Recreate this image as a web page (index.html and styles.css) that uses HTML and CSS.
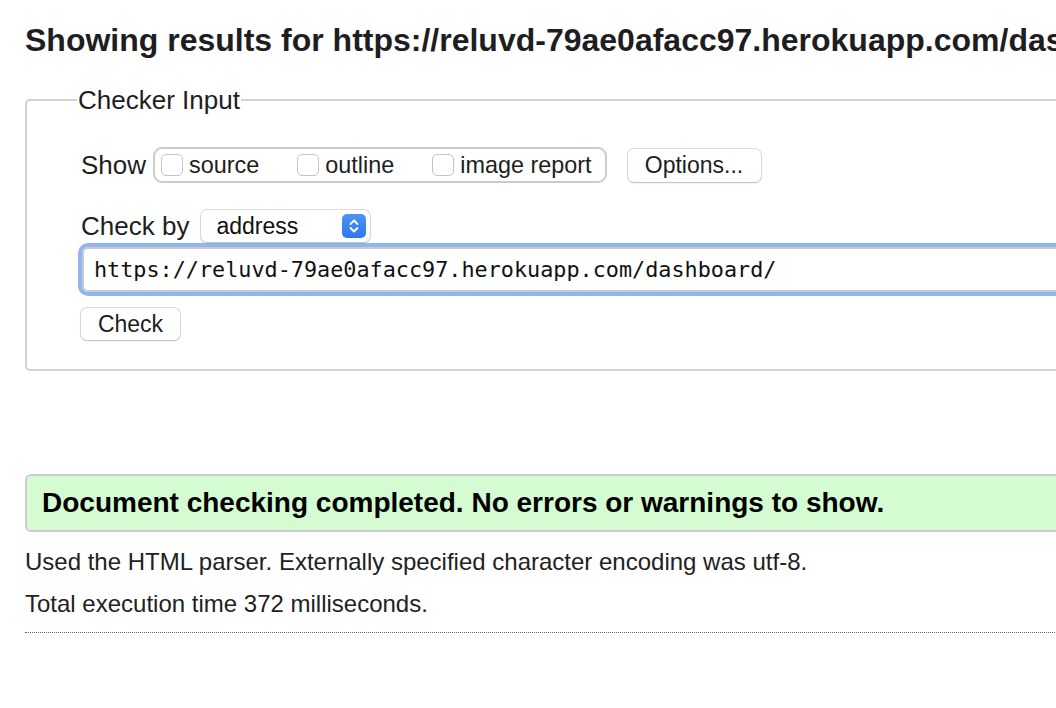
FILE: index.html
```html
<!DOCTYPE html>
<html lang="en">
<head>
<meta charset="utf-8">
<title>Nu Html Checker</title>
<link rel="stylesheet" href="styles.css">
</head>
<body>
<div class="page">
  <h2 class="title">Showing results for https://reluvd-79ae0afacc97.herokuapp.com/dashboard/</h2>
  <fieldset class="checker">
    <legend class="legend">Checker Input</legend>
    <div class="row row-show">
      <span class="label">Show</span>
      <div class="group">
        <span class="opt"><span class="box"></span><span class="opt-text">source</span></span>
        <span class="opt"><span class="box"></span><span class="opt-text">outline</span></span>
        <span class="opt"><span class="box"></span><span class="opt-text">image report</span></span>
      </div>
      <span class="btn btn-options">Options...</span>
    </div>
    <div class="row row-by">
      <span class="label">Check by</span>
      <span class="select">
        <span class="select-text">address</span>
        <span class="stepper">
          <svg width="12" height="16" viewBox="0 0 12 16"><path d="M2.5 6 L6 2.5 L9.5 6" fill="none" stroke="#fff" stroke-width="1.8" stroke-linecap="round" stroke-linejoin="round"/><path d="M2.5 10 L6 13.5 L9.5 10" fill="none" stroke="#fff" stroke-width="1.8" stroke-linecap="round" stroke-linejoin="round"/></svg>
        </span>
      </span>
    </div>
    <div class="url">https://reluvd-79ae0afacc97.herokuapp.com/dashboard/</div>
    <div class="row"><span class="btn btn-check">Check</span></div>
  </fieldset>
  <div class="success">Document checking completed. No errors or warnings to show.</div>
  <p class="info">Used the HTML parser. Externally specified character encoding was utf-8.</p>
  <p class="info info-time">Total execution time 372 milliseconds.</p>
  <div class="rule"></div>
</div>
</body>
</html>
```

FILE: styles.css
```css
html, body {
  margin: 0;
  padding: 0;
  overflow: hidden;
  background: #fff;
}
body {
  font-family: "Liberation Sans", Arial, Helvetica, sans-serif;
  color: #222;
}
.page {
  width: 1400px;
  padding-left: 25px;
}
.title {
  margin: 20px 0 0 0;
  font-size: 32px;
  line-height: 40px;
  font-weight: bold;
  color: #1e1e22;
  white-space: nowrap;
}
.checker {
  margin: 25px 0 0 0;
  padding: 0 0 29px 54px;
  border: 2px solid #d2d2d2;
  border-radius: 5px;
  width: 1200px;
  box-sizing: border-box;
}
.legend {
  font-size: 26px;
  line-height: 30px;
  padding: 0 1px;
  margin-left: -4px;
  color: #1e1e1e;
}
.row {
  display: flex;
  align-items: center;
}
.label {
  font-size: 26px;
  color: #1e1e1e;
}
.row-show {
  margin-top: 32px;
}
.group {
  display: flex;
  align-items: center;
  margin-left: 7px;
  height: 32px;
  padding: 0 13px 0 6px;
  border: 2px solid #cbcbcb;
  border-radius: 9px;
}
.opt {
  display: flex;
  align-items: center;
  margin-right: 38px;
}
.opt:last-child {
  margin-right: 0;
}
.box {
  width: 20px;
  height: 20px;
  border: 1px solid #c4c4c4;
  border-radius: 5px;
  background: #fff;
  margin-right: 6px;
}
.opt-text {
  font-size: 23.4px;
  color: #1e1e1e;
}
.btn {
  display: inline-flex;
  align-items: center;
  justify-content: center;
  box-sizing: border-box;
  height: 33px;
  border-radius: 6px;
  background: #fff;
  font-size: 23px;
  color: #1e1e1e;
  box-shadow: 0 0 0 1px rgba(0,0,0,0.13), 0 1px 2px rgba(0,0,0,0.15);
}
.btn-options {
  margin-left: 21px;
  width: 133px;
}
.btn-check {
  width: 99px;
  height: 32px;
  margin-top: 16px;
}
.row-by {
  margin-top: 27px;
}
.select {
  display: flex;
  align-items: center;
  justify-content: space-between;
  box-sizing: border-box;
  margin-left: 12px;
  width: 169px;
  height: 32px;
  padding: 0 4px 0 15px;
  border-radius: 6px;
  background: #fff;
  box-shadow: 0 0 0 1px rgba(0,0,0,0.12), 0 1px 2px rgba(0,0,0,0.15);
}
.select-text {
  font-size: 23px;
  color: #111;
}
.stepper {
  display: flex;
  align-items: center;
  justify-content: center;
  width: 24px;
  height: 24px;
  border-radius: 5px;
  background: linear-gradient(#4f93f7, #2f77ee);
}
.url {
  box-sizing: border-box;
  margin: 5px 0 0 1px;
  height: 45px;
  width: 1100px;
  padding: 0 0 0 10px;
  display: flex;
  align-items: center;
  border: 2px solid #c9c9c9;
  border-radius: 6px;
  box-shadow: 0 0 0 4px #91b5f1;
  font-family: "DejaVu Sans Mono", "Liberation Mono", monospace;
  font-size: 21.8px;
  letter-spacing: 0;
  color: #111;
}
.success {
  margin-top: 103px;
  width: 1200px;
  box-sizing: border-box;
  height: 58px;
  padding: 0 0 0 15px;
  display: flex;
  align-items: center;
  background: #d4fbd1;
  border: 2px solid #cccccc;
  border-radius: 6px;
  font-size: 28px;
  font-weight: bold;
  color: #000;
}
.info {
  margin: 16px 0 0 0;
  font-size: 24px;
  line-height: 28px;
  color: #222;
}
.info-time {
  margin-top: 14px;
}
.rule {
  margin-top: 14px;
  width: 1200px;
  border-top: 1px dotted #666;
}
```
